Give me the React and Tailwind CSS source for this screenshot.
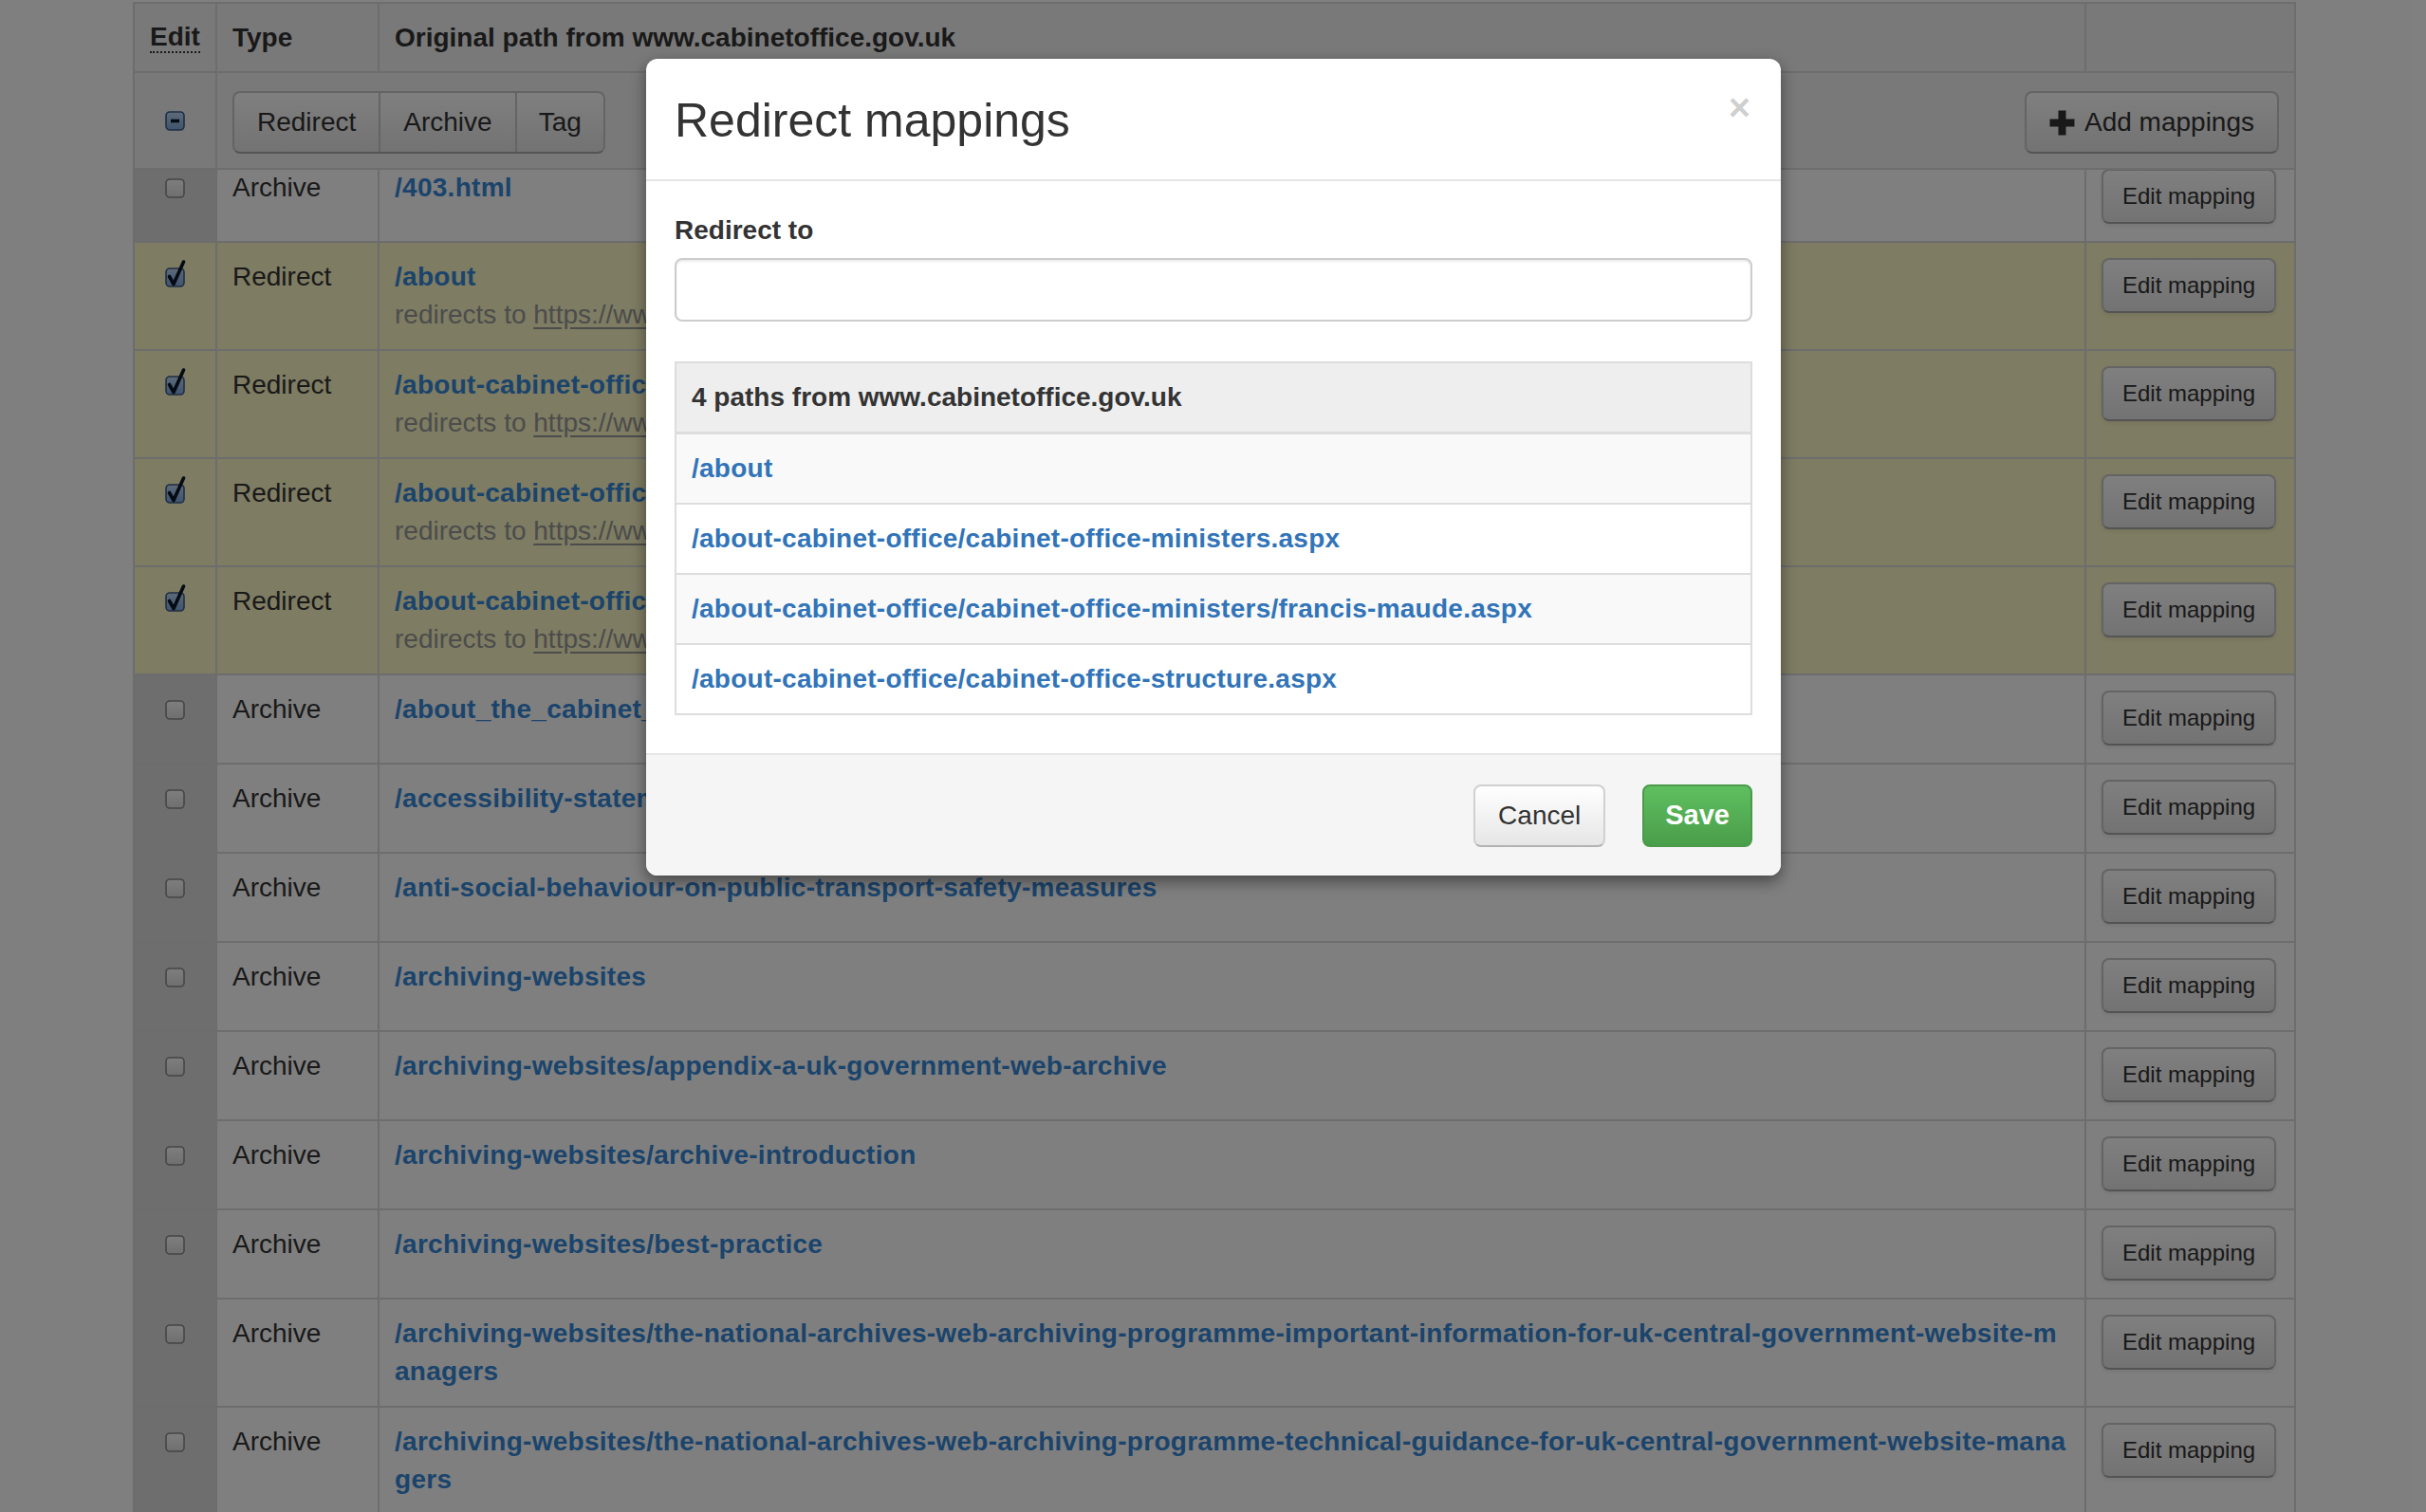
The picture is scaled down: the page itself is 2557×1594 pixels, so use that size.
import React from "react";

const rows = [
  { type: "Archive", path: "/403.html" },
  {
    type: "Redirect",
    path: "/about",
    to: "https://www.gov.uk/government/organisations/cabinet-office/about",
    checked: true,
  },
  {
    type: "Redirect",
    path: "/about-cabinet-office/cabinet-office-ministers.aspx",
    to: "https://www.gov.uk/government/organisations/cabinet-office",
    checked: true,
  },
  {
    type: "Redirect",
    path: "/about-cabinet-office/cabinet-office-ministers/francis-maude.aspx",
    to: "https://www.gov.uk/government/people/francis-maude",
    checked: true,
  },
  {
    type: "Redirect",
    path: "/about-cabinet-office/cabinet-office-structure.aspx",
    to: "https://www.gov.uk/government/organisations/cabinet-office",
    checked: true,
  },
  { type: "Archive", path: "/about_the_cabinet_office" },
  { type: "Archive", path: "/accessibility-statement" },
  { type: "Archive", path: "/anti-social-behaviour-on-public-transport-safety-measures" },
  { type: "Archive", path: "/archiving-websites" },
  { type: "Archive", path: "/archiving-websites/appendix-a-uk-government-web-archive" },
  { type: "Archive", path: "/archiving-websites/archive-introduction" },
  { type: "Archive", path: "/archiving-websites/best-practice" },
  {
    type: "Archive",
    path: "/archiving-websites/the-national-archives-web-archiving-programme-important-information-for-uk-central-government-website-managers",
  },
  {
    type: "Archive",
    path: "/archiving-websites/the-national-archives-web-archiving-programme-technical-guidance-for-uk-central-government-website-managers",
  },
];

const modalPaths = [
  "/about",
  "/about-cabinet-office/cabinet-office-ministers.aspx",
  "/about-cabinet-office/cabinet-office-ministers/francis-maude.aspx",
  "/about-cabinet-office/cabinet-office-structure.aspx",
];

const Checkbox = ({ state }) => {
  const on = state !== "empty";
  return (
    <svg width="21" height="21" viewBox="0 0 21 21" className="overflow-visible">
      <defs>
        <linearGradient id="cbOff" x1="0" y1="0" x2="0" y2="1">
          <stop offset="0" stopColor="#fdfdfd" />
          <stop offset="1" stopColor="#dedede" />
        </linearGradient>
        <linearGradient id="cbOn" x1="0" y1="0" x2="0" y2="1">
          <stop offset="0" stopColor="#bcd6f3" />
          <stop offset="1" stopColor="#7fa8da" />
        </linearGradient>
      </defs>
      <rect
        x="1"
        y="1"
        width="19"
        height="19"
        rx="4"
        fill={on ? "url(#cbOn)" : "url(#cbOff)"}
        stroke={on ? "#3d5b86" : "#8a8a8a"}
        strokeWidth="1.6"
      />
      {state === "checked" && (
        <path
          d="M4.5 9.5 L9 17.5 L19.5 -6"
          fill="none"
          stroke="#0a162a"
          strokeWidth="3.6"
          strokeLinecap="round"
          strokeLinejoin="round"
        />
      )}
      {state === "mixed" && (
        <path d="M6 10.5 H15" stroke="#0a162a" strokeWidth="3.6" strokeLinecap="butt" />
      )}
    </svg>
  );
};

const EditButton = () => (
  <div className="inline-flex h-[58px] items-center rounded-[8px] border-2 border-[#c8c8c8] border-b-[#a9a9a9] bg-linear-to-b from-white to-[#e6e6e6] px-[20px] text-[24px] text-[#333] shadow-[0_2px_4px_rgba(0,0,0,0.08)]">
    Edit mapping
  </div>
);

const Row = ({ r }) => (
  <div
    className={
      r.checked
        ? "grid grid-cols-[87px_171px_1799px_219px] border-b-2 border-[#dadada] bg-[#fcf8c4]"
        : "grid grid-cols-[87px_171px_1799px_219px] border-b-2 border-[#dadada] bg-white"
    }
  >
    <div
      className={
        r.checked
          ? "flex justify-center border-r-2 border-[#dadada] py-[16px]"
          : "flex justify-center border-r-2 border-[#dadada] bg-[#dcdcdc] py-[16px]"
      }
    >
      <div className="flex h-[40px] items-center">
        <Checkbox state={r.checked ? "checked" : "empty"} />
      </div>
    </div>
    <div className="border-r-2 border-[#dadada] p-[16px] leading-[40px] text-[#333]">{r.type}</div>
    <div className="border-r-2 border-[#dadada] p-[16px] leading-[40px] break-all">
      <a className="font-bold tracking-[0.28px] text-[#3788d8]">{r.path}</a>
      {r.to && (
        <div className="whitespace-nowrap text-[#999]">
          redirects to <span className="underline underline-offset-4">{r.to}</span>
        </div>
      )}
    </div>
    <div className="p-[16px]">
      <div className="h-[60px]">
        <EditButton />
      </div>
    </div>
  </div>
);

const BackgroundTable = () => (
  <div className="ml-[140px] mt-[2px] w-[2280px] border-x-2 border-t-2 border-[#dadada] text-[28px]">
    <div className="grid h-[73px] grid-cols-[87px_171px_1799px_219px] border-b-2 border-[#dadada] bg-[#f2f2f2] font-bold text-[#333]">
      <div className="flex items-center border-r-2 border-[#dadada] px-[16px]">
        <span className="border-b-2 border-dotted border-[#333] leading-[30px]">Edit</span>
      </div>
      <div className="flex items-center border-r-2 border-[#dadada] px-[16px]">Type</div>
      <div className="flex items-center border-r-2 border-[#dadada] px-[16px]">
        Original path from www.cabinetoffice.gov.uk
      </div>
      <div />
    </div>
    <div className="relative z-10 grid grid-cols-[87px_2189px] border-b-2 border-[#dadada] bg-[#f2f2f2]">
      <div className="flex items-center justify-center border-r-2 border-[#dadada]">
        <Checkbox state="mixed" />
      </div>
      <div className="flex items-center justify-between pt-[19px] pb-[15px] pl-[16px] pr-[16px] text-[#333]">
        <div className="flex h-[66px] overflow-hidden rounded-[8px] border-2 border-[#c8c8c8] border-b-[#a9a9a9] bg-linear-to-b from-white to-[#e6e6e6]">
          <div className="flex items-center px-[24px]">Redirect</div>
          <div className="flex items-center border-l-2 border-[#c8c8c8] px-[24px]">Archive</div>
          <div className="flex items-center border-l-2 border-[#c8c8c8] px-[23px]">Tag</div>
        </div>
        <div className="flex h-[66px] items-center gap-[10px] rounded-[8px] border-2 border-[#c8c8c8] border-b-[#a9a9a9] bg-linear-to-b from-white to-[#e6e6e6] px-[24px]">
          <svg width="27" height="27" viewBox="0 0 27 27">
            <rect x="9.5" y="0.5" width="8" height="26" fill="#333" />
            <rect x="0.5" y="9.5" width="26" height="8" fill="#333" />
          </svg>
          <span>Add mappings</span>
        </div>
      </div>
    </div>
    <div className="-mt-[17px]">
      {rows.map((r, i) => (
        <Row key={i} r={r} />
      ))}
    </div>
  </div>
);

const Modal = () => (
  <div className="absolute left-[681px] top-[62px] z-30 w-[1196px] overflow-hidden rounded-[12px] bg-white text-[28px] text-[#333] shadow-[0_6px_16px_rgba(0,0,0,0.45)]">
    <div className="flex items-start justify-between border-b-2 border-[#e5e5e5] pt-[31px] pb-[35px] pl-[30px] pr-[32px]">
      <h3 className="mt-[7px] text-[50px] leading-[54px] font-normal">Redirect mappings</h3>
      <span className="text-[40px] leading-[40px] font-bold text-black/20">×</span>
    </div>
    <div className="px-[30px] pt-[32px] pb-[40px]">
      <div className="mb-[9px] leading-[40px] font-bold">Redirect to</div>
      <div className="h-[67px] rounded-[8px] border-2 border-[#cccccc] shadow-[inset_0_2px_2px_rgba(0,0,0,0.08)]" />
      <div className="mt-[42px] border-2 border-[#dddddd]">
        <div className="border-b-[3px] border-[#dddddd] bg-[#eeeeee] p-[16px] leading-[40px] font-bold">
          4 paths from www.cabinetoffice.gov.uk
        </div>
        {modalPaths.map((p, i) => (
          <div
            key={p}
            className={
              i % 2 === 0
                ? "border-b-2 border-[#dddddd] bg-[#f9f9f9] p-[16px] leading-[40px] last:border-b-0"
                : "border-b-2 border-[#dddddd] bg-white p-[16px] leading-[40px] last:border-b-0"
            }
          >
            <a className="font-bold tracking-[0.25px] text-[#3174b8]">{p}</a>
          </div>
        ))}
      </div>
    </div>
    <div className="flex justify-end gap-[39px] border-t-2 border-[#e5e5e5] bg-[#f5f5f5] pt-[31px] pb-[30px] px-[30px]">
      <div className="flex h-[66px] items-center rounded-[8px] border-2 border-[#d0d0d0] border-b-[#b3b3b3] bg-linear-to-b from-white to-[#e6e6e6] px-[24px] text-[#333]">
        Cancel
      </div>
      <div className="flex h-[66px] items-center rounded-[8px] border-2 border-[#4a9a4a] bg-linear-to-b from-[#5fbf5f] to-[#4a9e4a] px-[22px] text-[29px] font-bold text-white">
        Save
      </div>
    </div>
  </div>
);

export default function App() {
  return (
    <div className="relative h-[1594px] w-full overflow-hidden bg-white font-['Liberation_Sans',Arial,sans-serif]">
      <BackgroundTable />
      <div className="absolute inset-0 z-20 bg-black/50" />
      <Modal />
    </div>
  );
}
